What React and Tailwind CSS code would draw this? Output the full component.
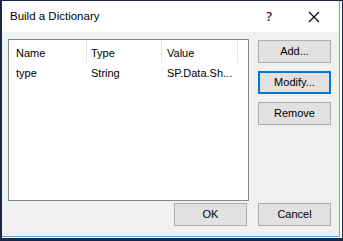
import React from "react";

function Btn({ children, focused, className = "" }) {
  return (
    <div
      className={
        "flex items-center justify-center h-[23px] w-[73px] bg-[#e1e1e1] text-[11px] text-black " +
        (focused ? "border-2 border-[#0078d7]" : "border border-[#adadad]") +
        " " + className
      }
    >
      {children}
    </div>
  );
}

export default function App() {
  return (
    <div
      className="w-[343px] h-[241px] bg-[#1b2746] pt-px pl-[2px] pr-px pb-[3px]"
      style={{ fontFamily: '"Liberation Sans", Arial, sans-serif' }}
    >
      <div className="w-full h-full bg-white pr-[2px] pb-px">
        <div className="w-full h-full flex flex-col border-r border-b border-[#5aa6dc]">
          {/* Title bar */}
          <div className="h-[31px] flex items-center bg-white pl-[8px] shrink-0">
            <span className="text-[11.5px] text-black">Build a Dictionary</span>
            <span className="ml-auto mr-[36px] text-[13px] text-[#222]" style={{ fontFamily: '"Noto Sans", sans-serif', fontWeight: 500 }}>?</span>
            <svg width="12" height="12" viewBox="0 0 12 12" className="mr-[19px]">
              <path d="M1 1 L11 11 M11 1 L1 11" stroke="#000" strokeWidth="1.1" />
            </svg>
          </div>
          {/* Body */}
          <div className="flex-1 bg-[#f0f0f0] pl-[6px] pt-[7px] flex flex-col">
            <div className="flex">
              <div className="w-[241px] h-[162px] bg-white border border-[#828790] flex flex-col">
                <div className="flex h-[23px] text-[11px] text-black">
                  <div className="w-[78px] pl-[7px] pt-[3px] flex items-center border-r border-[#e5e5e5]">Name</div>
                  <div className="w-[75px] pl-[4px] pt-[3px] flex items-center border-r border-[#e5e5e5]">Type</div>
                  <div className="w-[76px] pl-[5px] pt-[3px] flex items-center border-r border-[#e5e5e5]">Value</div>
                </div>
                <div className="flex h-[20px] text-[11px] text-black">
                  <div className="w-[78px] pl-[7px] flex items-center">type</div>
                  <div className="w-[75px] pl-[4px] flex items-center">String</div>
                  <div className="w-[76px] pl-[5px] flex items-center whitespace-nowrap">SP.Data.Sh...</div>
                </div>
              </div>
              <div className="ml-[9px] flex flex-col pt-px">
                <Btn>Add...</Btn>
                <Btn focused className="mt-[8px]">Modify...</Btn>
                <Btn className="mt-[8px]">Remove</Btn>
              </div>
            </div>
            <div className="flex mt-[2px] pl-[166px]">
              <Btn>OK</Btn>
              <Btn className="ml-[11px]">Cancel</Btn>
            </div>
          </div>
        </div>
      </div>
    </div>
  );
}
